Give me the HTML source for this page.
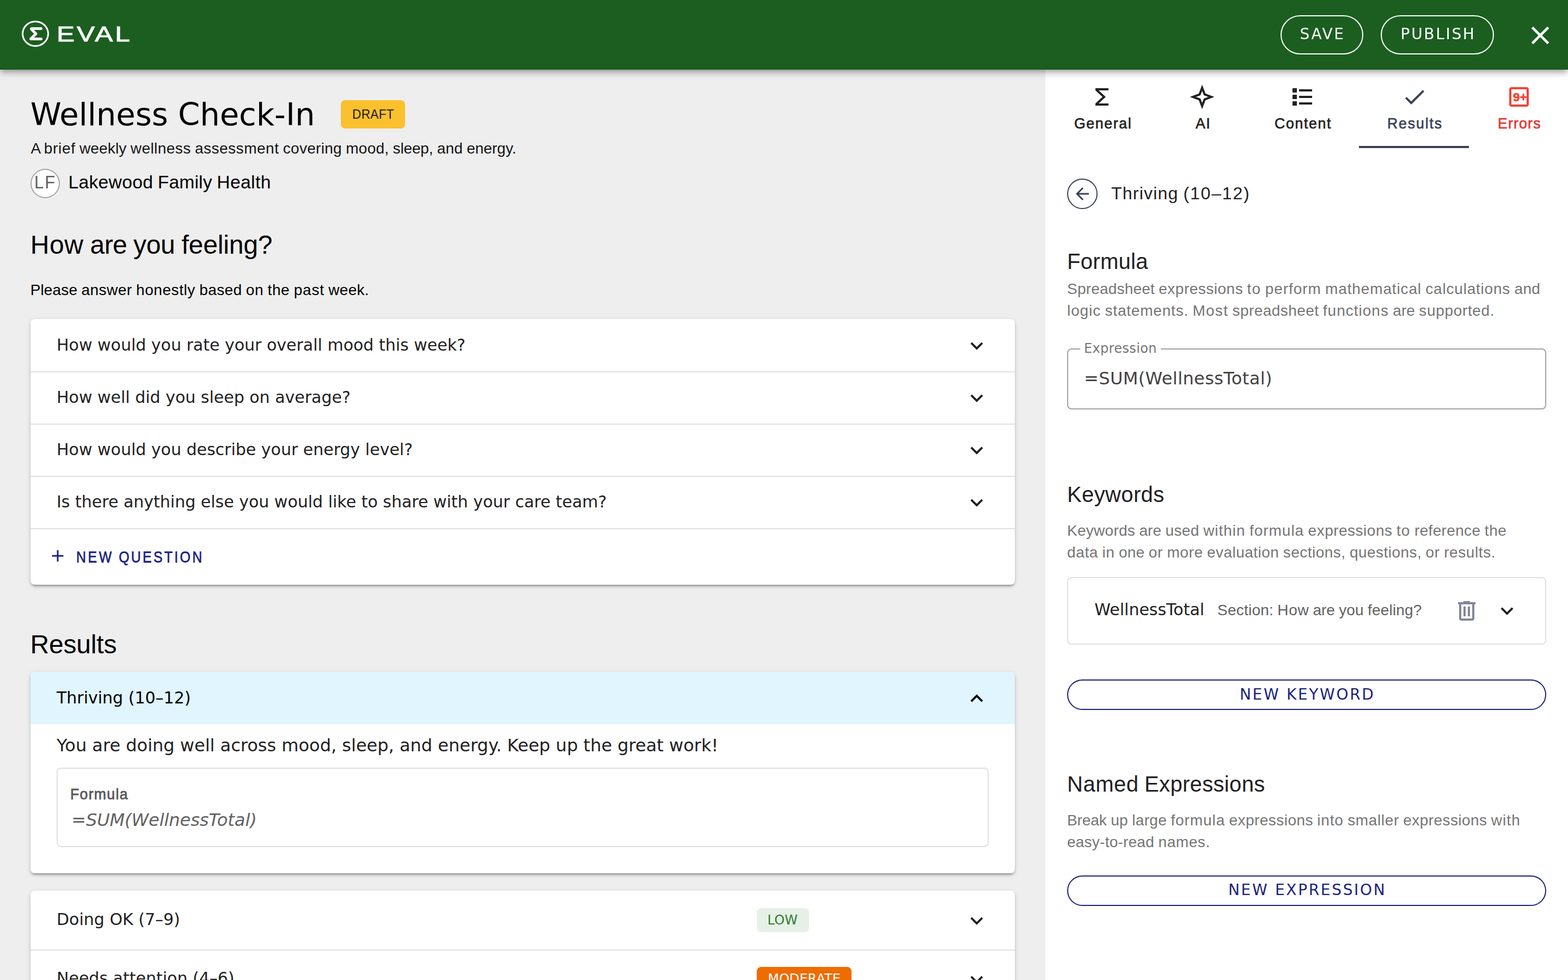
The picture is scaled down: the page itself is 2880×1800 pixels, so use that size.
<!DOCTYPE html>
<html lang="en">
<head>
<meta charset="utf-8">
<title>Wellness Check-In – Eval</title>
<style>
*{box-sizing:border-box;margin:0;padding:0}
html,body{width:2880px;height:1800px;overflow:hidden;background:#fff}
body{position:relative;font-family:"Liberation Sans",sans-serif;color:#000}
.dj{font-family:"DejaVu Sans","Liberation Sans",sans-serif}
.t{position:absolute;white-space:nowrap;line-height:0;font-weight:400}
.b{font-weight:700}
.i{font-style:italic}
.m{-webkit-text-stroke:0 currentColor}
.sx{transform-origin:0 0}
svg{position:absolute;display:block;overflow:visible}
button{font:inherit;color:inherit;background:none;border:0;display:block}
header{position:fixed;left:0;top:0;width:2880px;height:128px;background:#1b5e20;z-index:5;will-change:transform;
  box-shadow:0 4px 8px -2px rgba(0,0,0,.2),0 8px 10px 0 rgba(0,0,0,.14),0 2px 20px 0 rgba(0,0,0,.12)}
.ring{position:absolute;left:40px;top:38px;width:50px;height:48px;border:3px solid #fff;border-radius:50%}
.brand{color:#fff;transform-origin:0 50%;transform:scaleX(1.27);-webkit-text-stroke:.9px #fff}
.hbtn{position:absolute;top:28px;height:72px;border:2px solid #fff;border-radius:36px;color:#fff}
main{position:absolute;left:0;top:128px;width:1920px;height:1672px;background:#eee;overflow:hidden}
.chip{position:absolute;border-radius:8px}
.avatar{position:absolute;left:56px;top:182px;width:54px;height:54px;border-radius:50%;background:#fff;border:2px solid #a6a6a6}
.card{position:absolute;left:56px;width:1808px;background:#fff;border-radius:8px;
  box-shadow:0 6px 2px -4px rgba(0,0,0,.2),0 4px 4px 0 rgba(0,0,0,.14),0 2px 10px 0 rgba(0,0,0,.12)}
.row{position:absolute;left:0;width:1808px;height:96px}
.sep{border-top:2px solid #e0e0e0}
.open{background:#e1f5fe;border-radius:8px 8px 0 0}
.box{position:absolute;border:2px solid #e0e0e0;border-radius:8px}
aside{position:absolute;left:1920px;top:128px;width:960px;height:1672px;background:#fff;overflow:hidden}
.tab{position:absolute;top:0;height:144px}
.ind{position:absolute;left:576px;top:140px;width:202px;height:4px;background:#3b4259}
.back{position:absolute;left:40px;top:200px;width:56px;height:56px;border:2px solid #3b4259;border-radius:50%}
.field{position:absolute;left:40px;top:512px;width:880px;height:112px;border:2px solid #a3a3a3;border-radius:8px}
.notch{position:absolute;left:22px;top:-2px;width:148px;height:2px;background:#fff}
.pill{position:absolute;left:40px;width:880px;height:56px;border:2px solid #1a237e;border-radius:28px;color:#1a237e}
</style>
<script>
(function () {
  var w = window.innerWidth || 2880;
  if (Math.abs(w - 2880) > 1) document.documentElement.style.zoom = w / 2880;
})();
</script>
</head>
<body>

<header>
  <div class="ring"></div>
  <svg style="left:52.5px;top:49.5px" width="24" height="24" viewBox="0 0 24 24" aria-hidden="true"><path fill="none" stroke="#fff" stroke-width="5" stroke-linecap="round" stroke-linejoin="round" d="M22.500 2.500H5.500Q3.500 2.500 5 4L13 12 3.500 21.500H22.500"/></svg>
  <span class="t brand" style="left:103.75px;top:63.3px;font-size:39px;letter-spacing:3.1px">EVAL</span>
  <button class="hbtn" style="left:2352px;width:152px"><span class="t dj" style="left:33.45px;top:33px;font-size:28px;letter-spacing:2.68px">SAVE</span></button>
  <button class="hbtn" style="left:2536px;width:208px"><span class="t dj" style="left:34.57px;top:33px;font-size:28px;letter-spacing:2.68px">PUBLISH</span></button>
  <svg style="left:2801px;top:36.5px" width="56" height="56" viewBox="0 0 24 24" aria-hidden="true"><path fill="#fff" d="M19 6.41 17.59 5 12 10.59 6.41 5 5 6.41 10.59 12 5 17.59 6.41 19 12 13.41 17.59 19 19 17.59 13.41 12z"/></svg>
</header>

<main>
  <h1 class="t dj" style="left:55.7px;top:83.15px;font-size:57.6px">Wellness Check-In</h1>
  <span class="chip" style="left:626px;top:56px;width:118px;height:52px;background:#fbc02d"><span class="t sx" style="left:20.94px;top:25.8px;font-size:24.5px;letter-spacing:0.386px;transform:scaleX(0.92);color:#1c1a12">DRAFT</span></span>
  <p class="t" style="left:56.5px;top:144.8px;font-size:28px;color:#141414"><span style="letter-spacing:-0.14px;word-spacing:-0.42px">A </span><span style="letter-spacing:0.7px;word-spacing:-1.26px">brief </span><span style="letter-spacing:0.17px;word-spacing:-0.73px">weekly </span><span style="letter-spacing:0.44px;word-spacing:-1px">wellness </span><span style="letter-spacing:0.52px;word-spacing:-1.09px">assessment </span><span style="letter-spacing:0.31px;word-spacing:-0.87px">covering </span><span style="letter-spacing:0.26px;word-spacing:-0.83px">mood, </span><span style="letter-spacing:-0.15px;word-spacing:-0.41px">sleep, </span><span style="letter-spacing:0.19px;word-spacing:-0.76px">and </span><span style="letter-spacing:-0.02px">energy.</span></p>
  <div class="avatar"></div>
  <span class="t sx" style="left:63.28px;top:207px;font-size:33px;letter-spacing:2.062px;transform:scaleX(0.94);color:#616161">LF</span>
  <span class="t" style="left:125.38px;top:207.4px;font-size:33.6px"><span style="letter-spacing:0.34px;word-spacing:-1.03px">Lakewood </span><span style="letter-spacing:0.15px;word-spacing:-0.84px">Family </span><span style="letter-spacing:0.41px">Health</span></span>

  <h2 class="t" style="left:55.75px;top:322px;font-size:48px"><span style="letter-spacing:0.61px;word-spacing:-1.98px">How </span><span style="letter-spacing:-0.61px;word-spacing:-0.77px">are </span><span style="letter-spacing:-0.34px;word-spacing:-1.03px">you </span><span style="letter-spacing:-0.15px">feeling?</span></h2>
  <p class="t" style="left:55.66px;top:405px;font-size:28px"><span style="letter-spacing:0.14px;word-spacing:-0.54px">Please </span><span style="letter-spacing:0.48px;word-spacing:-0.88px">answer </span><span style="letter-spacing:0.57px;word-spacing:-0.97px">honestly </span><span style="letter-spacing:0.38px;word-spacing:-0.78px">based </span><span style="letter-spacing:0.58px;word-spacing:-0.98px">on </span><span style="letter-spacing:0.6px;word-spacing:-1px">the </span><span style="letter-spacing:0.84px;word-spacing:-1.24px">past </span><span style="letter-spacing:0.27px">week.</span></p>

  <section class="card" style="top:458px;height:488px">
    <div class="row" style="top:0px"><span class="t dj q" style="left:48px;top:48px;font-size:30px;color:#212121">How would you rate your overall mood this week?</span><svg style="left:1714.9px;top:26px" width="46" height="46" viewBox="0 0 24 24" aria-hidden="true"><path fill="#212121" d="M16.59 8.59 12 13.17 7.41 8.59 6 10l6 6 6-6z"/></svg></div>
    <div class="row sep" style="top:96px"><span class="t dj q" style="left:48px;top:46px;font-size:30px;color:#212121">How well did you sleep on average?</span><svg style="left:1714.9px;top:24px" width="46" height="46" viewBox="0 0 24 24" aria-hidden="true"><path fill="#212121" d="M16.59 8.59 12 13.17 7.41 8.59 6 10l6 6 6-6z"/></svg></div>
    <div class="row sep" style="top:192px"><span class="t dj q" style="left:48px;top:46px;font-size:30px;color:#212121">How would you describe your energy level?</span><svg style="left:1714.9px;top:24px" width="46" height="46" viewBox="0 0 24 24" aria-hidden="true"><path fill="#212121" d="M16.59 8.59 12 13.17 7.41 8.59 6 10l6 6 6-6z"/></svg></div>
    <div class="row sep" style="top:288px"><span class="t dj q" style="left:48px;top:46px;font-size:30px;color:#212121">Is there anything else you would like to share with your care team?</span><svg style="left:1714.9px;top:24px" width="46" height="46" viewBox="0 0 24 24" aria-hidden="true"><path fill="#212121" d="M16.59 8.59 12 13.17 7.41 8.59 6 10l6 6 6-6z"/></svg></div>
    <div class="row sep" style="top:384px;height:104px"><svg style="left:32px;top:30.5px" width="36" height="36" viewBox="0 0 24 24" aria-hidden="true"><path fill="#1a237e" d="M19 13h-6v6h-2v-6H5v-2h6V5h2v6h6z"/></svg><span class="t sx m" style="left:83.69px;top:50.5px;font-size:28.8px;transform:scaleX(0.86);color:#1a237e;-webkit-text-stroke-width:0.75px"><span style="letter-spacing:4.26px;word-spacing:-1.34px">NEW </span><span style="letter-spacing:3.91px">QUESTION</span></span></div>
  </section>

  <h2 class="t" style="left:55.55px;top:1056px;font-size:48px;letter-spacing:-0.184px">Results</h2>

  <section class="card" style="top:1106px;height:370px">
    <div class="row open" style="top:0"><span class="t dj" style="left:48px;top:48px;font-size:30px">Thriving (10–12)</span><svg style="left:1714.9px;top:26px" width="46" height="46" viewBox="0 0 24 24" aria-hidden="true"><path fill="#000" d="m12 8-6 6 1.41 1.41L12 10.83l4.59 4.58L18 14z"/></svg></div>
    <p class="t dj" style="left:48px;top:135.3px;font-size:32px;color:#212121">You are doing well across mood, sleep, and energy. Keep up the great work!</p>
    <div class="box" style="left:48px;top:176px;width:1712px;height:146px"></div>
    <span class="t sx m" style="left:73.33px;top:225px;font-size:28px;letter-spacing:1.394px;transform:scaleX(0.95);color:#5a5a5a;-webkit-text-stroke-width:0.85px">Formula</span>
    <span class="t dj i" style="left:75.2px;top:271.6px;font-size:32px;letter-spacing:-0.07px;color:#616161">=SUM(WellnessTotal)</span>
  </section>

  <section class="card" style="top:1508px;height:330px">
    <div class="row" style="top:0;height:108px"><span class="t dj" style="left:48px;top:53px;font-size:30px;color:#212121">Doing OK (7–9)</span><span class="chip" style="left:1334px;top:32px;width:96px;height:44px;background:#e6f0e7"><span class="t dj" style="left:19.55px;top:22px;font-size:24px;letter-spacing:0.197px;color:#2e7d32">LOW</span></span><svg style="left:1714.9px;top:32px" width="46" height="46" viewBox="0 0 24 24" aria-hidden="true"><path fill="#212121" d="M16.59 8.59 12 13.17 7.41 8.59 6 10l6 6 6-6z"/></svg></div>
    <div class="row sep" style="top:108px;height:110px"><span class="t dj" style="left:48px;top:51px;font-size:30px;color:#212121">Needs attention (4–6)</span><span class="chip" style="left:1334px;top:30px;width:174px;height:44px;background:#ef6c00"><span class="t dj" style="left:20.15px;top:22px;font-size:24px;letter-spacing:0.059px;color:#fff">MODERATE</span></span><svg style="left:1714.9px;top:30px" width="46" height="46" viewBox="0 0 24 24" aria-hidden="true"><path fill="#212121" d="M16.59 8.59 12 13.17 7.41 8.59 6 10l6 6 6-6z"/></svg></div>
  </section>
</main>

<aside>
  <nav>
    <div class="tab" style="left:2px;width:206px"><svg style="left:78px;top:26px" width="48" height="48" viewBox="0 0 24 24" aria-hidden="true"><path fill="#212121" d="M18 4H6v2l6.5 6L6 18v2h12v-2H8.950L15.450 12 8.950 6H18z"/></svg><span class="t sx m" style="left:51.19px;top:99px;font-size:28px;letter-spacing:1.772px;transform:scaleX(0.95);color:#212121;-webkit-text-stroke-width:0.7px">General</span></div>
    <div class="tab" style="left:208px;width:160px"><svg style="left:56px;top:26px" width="48" height="48" viewBox="0 0 24 24" aria-hidden="true"><path fill="none" stroke="#212121" stroke-width="2" stroke-linejoin="miter" stroke-miterlimit="10" d="M12 3.600 14.300 9.700 20.400 12 14.300 14.300 12 20.400 9.700 14.300 3.600 12 9.700 9.700z"/></svg><span class="t sx m" style="left:68.33px;top:99px;font-size:28px;letter-spacing:1.479px;transform:scaleX(0.95);color:#212121;-webkit-text-stroke-width:0.7px">AI</span></div>
    <div class="tab" style="left:368px;width:208px"><svg style="left:80px;top:26px" width="48" height="48" viewBox="0 0 24 24" aria-hidden="true"><path fill="#212121" d="M3 4h4v4H3zM3 10h4v4H3zM3 16h4v4H3zM9 5h12v2H9zM9 11h12v2H9zM9 17h12v2H9z"/></svg><span class="t sx m" style="left:53.29px;top:99px;font-size:28px;letter-spacing:1.812px;transform:scaleX(0.95);color:#212121;-webkit-text-stroke-width:0.7px">Content</span></div>
    <div class="tab" style="left:576px;width:202px"><svg style="left:78.4px;top:26px" width="48" height="48" viewBox="0 0 24 24" aria-hidden="true"><path fill="#3b4259" d="M9 16.17 4.83 12l-1.42 1.41L9 19 21 7l-1.41-1.41z"/></svg><span class="t sx m" style="left:52.45px;top:99px;font-size:28px;letter-spacing:1.991px;transform:scaleX(0.95);color:#3b4259;-webkit-text-stroke-width:0.7px">Results</span></div>
    <div class="tab" style="left:778px;width:182px"><svg style="left:68px;top:26px" width="48" height="48" viewBox="0 0 24 24" aria-hidden="true"><path fill="#f44336" d="M19 3H5c-1.100 0-2 .900-2 2v14c0 1.100.900 2 2 2h14c1.100 0 2-.900 2-2V5c0-1.100-.900-2-2-2zm0 16H5V5h14z"/><text x="6.500" y="16" textLength="12.700" lengthAdjust="spacingAndGlyphs" font-family="Liberation Sans, sans-serif" font-weight="700" font-size="11.400" fill="#f44336" stroke="#f44336" stroke-width=".350">9+</text></svg><span class="t sx m" style="left:52.65px;top:99px;font-size:28px;letter-spacing:1.27px;transform:scaleX(0.95);color:#e53935;-webkit-text-stroke-width:0.7px">Errors</span></div>
    <div class="ind"></div>
  </nav>

  <button class="back"><svg style="left:8px;top:8px" width="36" height="36" viewBox="0 0 24 24" aria-hidden="true"><path fill="#3b4259" d="M20 11H7.83l5.59-5.59L12 4l-8 8 8 8 1.41-1.41L7.83 13H20z"/></svg></button>
  <span class="t" style="left:121.1px;top:227px;font-size:32px;color:#212121"><span style="letter-spacing:1.19px;word-spacing:-1.01px">Thriving </span><span style="letter-spacing:1.81px">(10–12)</span></span>

  <h3 class="t" style="left:39.97px;top:352px;font-size:40px;letter-spacing:0.312px;color:#212121">Formula</h3>
  <p class="t" style="left:40.03px;top:403px;font-size:28px;color:#757575"><span style="letter-spacing:0.19px;word-spacing:-0.6px">Spreadsheet </span><span style="letter-spacing:0.5px;word-spacing:-0.9px">expressions </span><span style="letter-spacing:1.18px;word-spacing:-1.59px">to </span><span style="letter-spacing:0.94px;word-spacing:-1.34px">perform </span><span style="letter-spacing:0.86px;word-spacing:-1.26px">mathematical </span><span style="letter-spacing:0.79px;word-spacing:-1.2px">calculations </span><span style="letter-spacing:0.35px">and</span></p>
  <p class="t" style="left:40px;top:443px;font-size:28px;color:#757575"><span style="letter-spacing:0.91px;word-spacing:-1.31px">logic </span><span style="letter-spacing:0.8px;word-spacing:-1.2px">statements. </span><span style="letter-spacing:1.27px;word-spacing:-1.67px">Most </span><span style="letter-spacing:0.43px;word-spacing:-0.82px">spreadsheet </span><span style="letter-spacing:1px;word-spacing:-1.4px">functions </span><span style="letter-spacing:0.05px;word-spacing:-0.45px">are </span><span style="letter-spacing:0.67px">supported.</span></p>

  <div class="field"><div class="notch"></div><label class="t dj" style="left:28.95px;top:-1.9px;font-size:24px;letter-spacing:0.354px;color:#757575">Expression</label><span class="t dj" style="left:29px;top:53.4px;font-size:32px;letter-spacing:0.393px;color:#424242">=SUM(WellnessTotal)</span></div>

  <h3 class="t" style="left:39.97px;top:780px;font-size:40px;letter-spacing:0.379px;color:#212121">Keywords</h3>
  <p class="t" style="left:40.01px;top:846.6px;font-size:28px;color:#757575"><span style="letter-spacing:0.27px;word-spacing:-0.67px">Keywords </span><span style="letter-spacing:0.05px;word-spacing:-0.45px">are </span><span style="letter-spacing:0.39px;word-spacing:-0.79px">used </span><span style="letter-spacing:0.96px;word-spacing:-1.35px">within </span><span style="letter-spacing:0.99px;word-spacing:-1.38px">formula </span><span style="letter-spacing:0.5px;word-spacing:-0.9px">expressions </span><span style="letter-spacing:1.19px;word-spacing:-1.59px">to </span><span style="letter-spacing:0.34px;word-spacing:-0.73px">reference </span><span style="letter-spacing:0.61px">the</span></p>
  <p class="t" style="left:40.03px;top:886.6px;font-size:28px;color:#757575"><span style="letter-spacing:0.64px;word-spacing:-1.06px">data </span><span style="letter-spacing:0.65px;word-spacing:-1.07px">in </span><span style="letter-spacing:0.27px;word-spacing:-0.69px">one </span><span style="letter-spacing:0.69px;word-spacing:-1.11px">or </span><span style="letter-spacing:0.61px;word-spacing:-1.04px">more </span><span style="letter-spacing:0.46px;word-spacing:-0.88px">evaluation </span><span style="letter-spacing:0.5px;word-spacing:-0.93px">sections, </span><span style="letter-spacing:0.45px;word-spacing:-0.87px">questions, </span><span style="letter-spacing:0.69px;word-spacing:-1.11px">or </span><span style="letter-spacing:0.6px">results.</span></p>

  <div class="box" style="left:40px;top:932px;width:880px;height:124px"><span class="t dj" style="left:48.36px;top:58.3px;font-size:30px;color:#212121">WellnessTotal</span><span class="t" style="left:274.12px;top:59.3px;font-size:28px;color:#616161"><span style="letter-spacing:0.22px;word-spacing:-0.73px">Section: </span><span style="letter-spacing:0.66px;word-spacing:-1.16px">How </span><span style="letter-spacing:-0.06px;word-spacing:-0.45px">are </span><span style="letter-spacing:0.1px;word-spacing:-0.6px">you </span><span style="letter-spacing:0.21px">feeling?</span></span><svg style="left:708px;top:36px" width="48" height="48" viewBox="0 0 24 24" aria-hidden="true"><path fill="#82879a" d="M7 21q-.825 0-1.412-.587Q5 19.825 5 19V6H4V4h5V3h6v1h5v2h-1v13q0 .825-.587 1.413Q17.825 21 17 21ZM17 6H7v13h10ZM9 17h2V8H9Zm4 0h2V8h-2Z"/></svg><svg style="left:782.9px;top:37px" width="46" height="46" viewBox="0 0 24 24" aria-hidden="true"><path fill="#212121" d="M16.59 8.59 12 13.17 7.41 8.59 6 10l6 6 6-6z"/></svg></div>

  <button class="pill" style="top:1120px"><span class="t dj" style="left:314.97px;top:25.5px;font-size:28px;letter-spacing:2.68px">NEW KEYWORD</span></button>

  <h3 class="t" style="left:39.97px;top:1312px;font-size:40px;color:#212121"><span style="letter-spacing:0.54px;word-spacing:-1.23px">Named </span><span style="letter-spacing:0.33px">Expressions</span></h3>
  <p class="t" style="left:40.01px;top:1378.6px;font-size:28px;color:#757575"><span style="letter-spacing:-0.07px;word-spacing:-0.39px">Break </span><span style="letter-spacing:0.38px;word-spacing:-0.84px">up </span><span style="letter-spacing:0.29px;word-spacing:-0.75px">large </span><span style="letter-spacing:0.93px;word-spacing:-1.38px">formula </span><span style="letter-spacing:0.44px;word-spacing:-0.9px">expressions </span><span style="letter-spacing:0.87px;word-spacing:-1.33px">into </span><span style="letter-spacing:0.65px;word-spacing:-1.11px">smaller </span><span style="letter-spacing:0.44px;word-spacing:-0.9px">expressions </span><span style="letter-spacing:1.03px">with</span></p>
  <p class="t" style="left:40.03px;top:1418.6px;font-size:28px;color:#757575"><span style="letter-spacing:0.23px;word-spacing:-0.5px">easy-to-read </span><span style="letter-spacing:0.58px">names.</span></p>

  <button class="pill" style="top:1480px"><span class="t dj" style="left:293.97px;top:25.4px;font-size:28px;letter-spacing:2.68px">NEW EXPRESSION</span></button>
</aside>

</body>
</html>
